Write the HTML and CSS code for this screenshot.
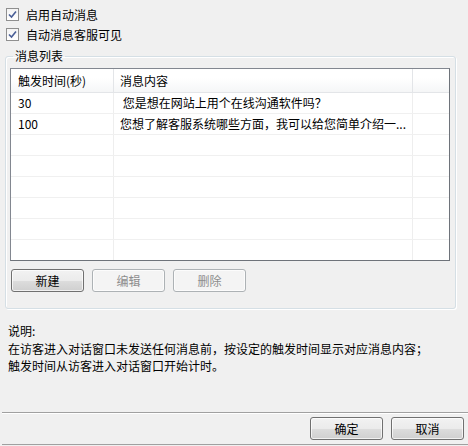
FILE: index.html
```html
<!DOCTYPE html>
<html lang="zh-CN">
<head>
  <meta charset="UTF-8">
  <title>自动消息</title>
  <link rel="stylesheet" href="styles.css">
</head>
<body>
  <div class="dialog">
    <div class="options">
      <label class="check"><span class="box"><svg viewBox="0 0 9 9" width="9" height="9"><path d="M1 4.5 L3.5 7 L8 1.5" fill="none" stroke="#4a5f97" stroke-width="1.6"/></svg></span>启用自动消息</label>
      <label class="check"><span class="box"><svg viewBox="0 0 9 9" width="9" height="9"><path d="M1 4.5 L3.5 7 L8 1.5" fill="none" stroke="#4a5f97" stroke-width="1.6"/></svg></span>自动消息客服可见</label>
    </div>

    <fieldset class="group">
      <legend>消息列表</legend>
      <div class="list">
        <div class="row head">
          <div class="cell time">触发时间(秒)</div>
          <div class="cell msg">消息内容</div>
          <div class="cell rest"></div>
        </div>
        <div class="row">
          <div class="cell time">30</div>
          <div class="cell msg">&nbsp;您是想在网站上用个在线沟通软件吗？</div>
          <div class="cell rest"></div>
        </div>
        <div class="row">
          <div class="cell time">100</div>
          <div class="cell msg">您想了解客服系统哪些方面，我可以给您简单介绍一...</div>
          <div class="cell rest"></div>
        </div>
        <div class="row"><div class="cell time"></div><div class="cell msg"></div><div class="cell rest"></div></div>
        <div class="row"><div class="cell time"></div><div class="cell msg"></div><div class="cell rest"></div></div>
        <div class="row"><div class="cell time"></div><div class="cell msg"></div><div class="cell rest"></div></div>
        <div class="row"><div class="cell time"></div><div class="cell msg"></div><div class="cell rest"></div></div>
        <div class="row"><div class="cell time"></div><div class="cell msg"></div><div class="cell rest"></div></div>
        <div class="row last"><div class="cell time"></div><div class="cell msg"></div><div class="cell rest"></div></div>
      </div>
      <div class="actions">
        <button class="btn">新建</button>
        <button class="btn" disabled>编辑</button>
        <button class="btn" disabled>删除</button>
      </div>
    </fieldset>

    <div class="note">
      <p>说明:</p>
      <p>在访客进入对话窗口未发送任何消息前，按设定的触发时间显示对应消息内容；</p>
      <p>触发时间从访客进入对话窗口开始计时。</p>
    </div>

    <div class="footer">
      <button class="btn">确定</button>
      <button class="btn">取消</button>
    </div>
  </div>
</body>
</html>
```

FILE: styles.css
```css
body {
  margin: 0;
  background-color: #f0f0f0;
  font-family: "Noto Sans CJK SC", "Microsoft YaHei", sans-serif;
  font-size: 12px;
  color: #000;
}

.dialog {
  width: 468px;
  height: 446px;
  overflow: hidden;
}

.options {
  padding: 4px 0 0 6px;
}

.check {
  display: flex;
  align-items: center;
  height: 20px;
  gap: 7px;
}

.box {
  width: 11px;
  height: 11px;
  border: 1px solid #8f8f8f;
  background: linear-gradient(#f4f4f4, #ffffff);
  display: flex;
  align-items: center;
  justify-content: center;
}

.group {
  margin: 4px 12px 0 5px;
  padding: 4px 5px 15px 4px;
  border: 1px solid #d5dfe5;
  border-radius: 3px;
  box-shadow: inset 1px 1px 0 #fff, 1px 1px 0 #fff;
  height: 240px;
}

.group legend {
  padding: 0 2px;
  margin-left: 3px;
  line-height: 16px;
}

.list {
  background-color: #fff;
  border: 1px solid #828790;
  border-right-color: #6e737a;
  border-bottom-color: #6e737a;
  height: 191px;
  overflow: hidden;
}

.row {
  display: flex;
  height: 20px;
  border-bottom: 1px solid #f0f0f0;
}

.row.head {
  height: 23px;
  border-bottom: 1px solid #e3e5e8;
  background: linear-gradient(#ffffff 40%, #f5f6f7);
}

.cell {
  line-height: 20px;
  border-right: 1px solid #eeeeee;
  white-space: nowrap;
  overflow: hidden;
}

.head .cell {
  line-height: 24px;
  border-right-color: #e3e5e8;
}

.time {
  width: 95px;
  padding-left: 7px;
  flex: none;
}

.msg {
  width: 292px;
  padding-left: 6px;
  flex: none;
}

.rest {
  flex: 1;
  border-right: none;
}

.actions {
  display: flex;
  gap: 8px;
  margin-top: 8px;
  padding-left: 1px;
}

.btn {
  width: 73px;
  height: 23px;
  padding: 0;
  font-family: inherit;
  font-size: 12px;
  color: #000;
  border: 1px solid #707070;
  border-radius: 3px;
  background: linear-gradient(#f2f2f2 0%, #ebebeb 50%, #dddddd 51%, #cfcfcf 100%);
  box-shadow: inset 0 0 0 1px rgba(255, 255, 255, 0.7);
}

.btn:disabled {
  color: #8d8d8d;
  border-color: #adb2b5;
  background: #f4f4f4;
}

.note {
  margin-top: 13px;
  padding-left: 8px;
}

.note p {
  margin: 0;
  line-height: 17.5px;
}

.footer {
  margin-top: 37px;
  border-top: 1px solid #a0a0a0;
  border-bottom: 1px solid #a0a0a0;
  box-shadow: inset 0 1px 0 #fff;
  margin-left: 2px;
  height: 31px;
  display: flex;
  justify-content: flex-end;
  align-items: center;
  gap: 8px;
  padding-right: 4px;
}
```
